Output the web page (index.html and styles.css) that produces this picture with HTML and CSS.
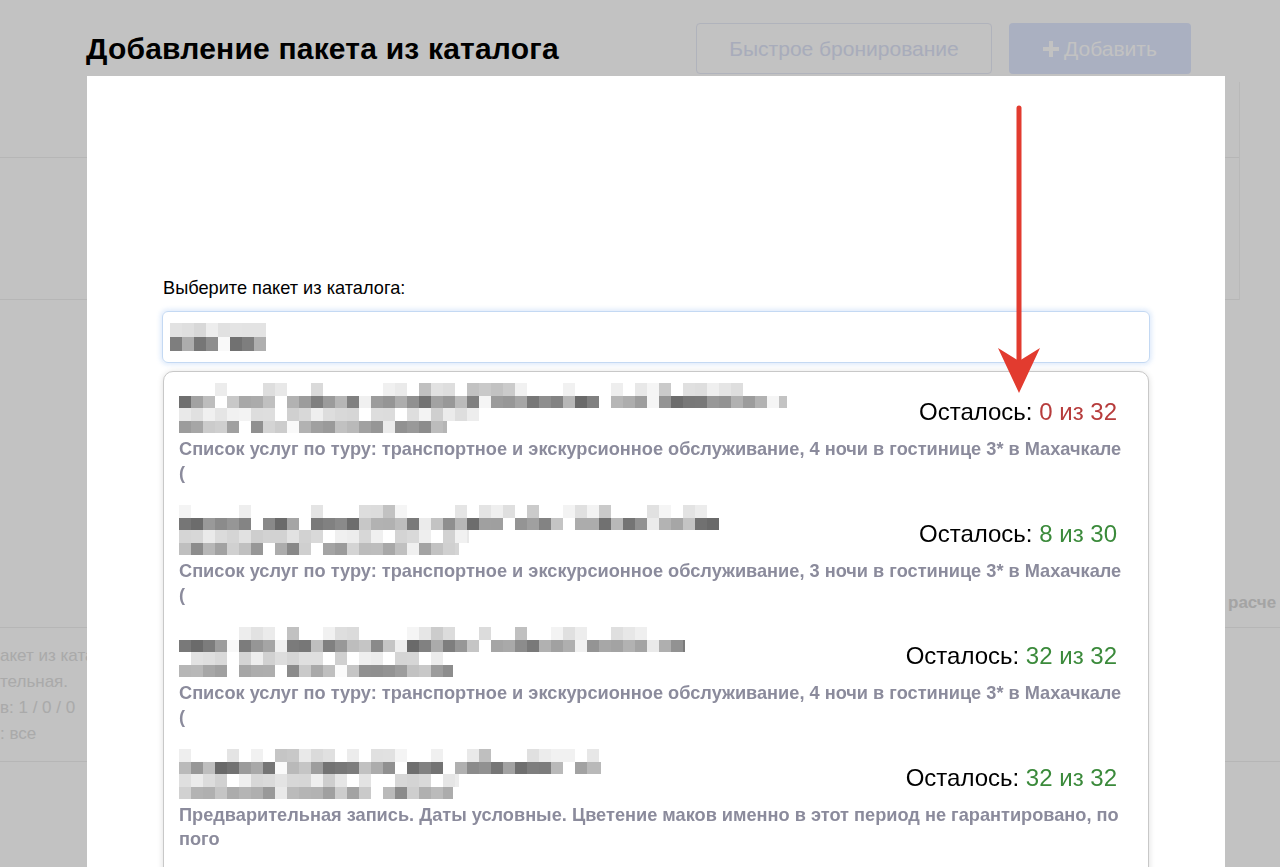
FILE: index.html
```html
<!DOCTYPE html>
<html lang="ru">
<head>
    <meta charset="UTF-8">
    <meta name="viewport" content="width=device-width, initial-scale=1.0">
    <title>Добавление пакета из каталога</title>
    <link rel="stylesheet" href="styles.css">
</head>
<body>
    <div class="page">
        <header class="page-head">
            <h1>Добавление пакета из каталога</h1>
            <div class="head-actions">
                <button class="btn btn-outline">Быстрое бронирование</button>
                <button class="btn btn-primary">
                    <svg class="plus" viewBox="0 0 16 16" width="16" height="16"><path d="M6 0h4v6h6v4h-6v6H6v-6H0V6h6z" fill="currentColor"/></svg>
                    Добавить
                </button>
            </div>
        </header>

        <section class="card">
            <div class="card-row card-row-top"></div>
            <div class="card-row card-row-main"></div>
        </section>

        <div class="totals">
            <span class="totals-label">расче</span>
        </div>

        <div class="package-info">
            <div>акет из каталога</div>
            <div>тельная.</div>
            <div>в: 1 / 0 / 0</div>
            <div>: все</div>
        </div>
    </div>

    <div class="backdrop"></div>

    <div class="modal">
        <label class="field-label" for="package-search">Выберите пакет из каталога:</label>
        <div class="search-input" id="package-search">
            <canvas class="mosaic" width="96" height="28" data-rows="s96,d96" data-seed="11"></canvas>
        </div>

        <div class="dropdown">
            <div class="option">
                <div class="option-head">
                    <canvas class="mosaic" width="608" height="50" data-rows="a608,d608,l300,m268" data-seed="3"></canvas>
                    <div class="stock">Осталось: <span class="stock-empty">0 из 32</span></div>
                </div>
                <div class="option-desc">Список услуг по туру: транспортное и экскурсионное обслуживание, 4 ночи в гостинице 3* в Махачкале (</div>
            </div>
            <div class="option">
                <div class="option-head">
                    <canvas class="mosaic" width="550" height="50" data-rows="a550,d540,l290,m280" data-seed="29"></canvas>
                    <div class="stock">Осталось: <span class="stock-ok">8 из 30</span></div>
                </div>
                <div class="option-desc">Список услуг по туру: транспортное и экскурсионное обслуживание, 3 ночи в гостинице 3* в Махачкале (</div>
            </div>
            <div class="option">
                <div class="option-head">
                    <canvas class="mosaic" width="506" height="50" data-rows="a506,d506,l280,m274" data-seed="57"></canvas>
                    <div class="stock">Осталось: <span class="stock-ok">32 из 32</span></div>
                </div>
                <div class="option-desc">Список услуг по туру: транспортное и экскурсионное обслуживание, 4 ночи в гостинице 3* в Махачкале (</div>
            </div>
            <div class="option">
                <div class="option-head">
                    <canvas class="mosaic" width="434" height="50" data-rows="a434,d422,l280,m274" data-seed="83"></canvas>
                    <div class="stock">Осталось: <span class="stock-ok">32 из 32</span></div>
                </div>
                <div class="option-desc">Предварительная запись. Даты условные. Цветение маков именно в этот период не гарантировано, по пого</div>
            </div>
            <div class="option">
                <div class="option-head">
                    <canvas class="mosaic" width="520" height="50" data-rows="a520,d510,l280,m270" data-seed="101"></canvas>
                </div>
            </div>
        </div>
    </div>

    <svg class="arrow" width="46" height="296" viewBox="0 0 46 296">
        <line x1="23" y1="4" x2="23" y2="262" stroke="#e23b2f" stroke-width="5" stroke-linecap="round"/>
        <path d="M2 244 L23 289 L44 244 L23 257 Z" fill="#e23b2f"/>
    </svg>

    <script src="script.js"></script>
</body>
</html>
```

FILE: styles.css
```css
* {
    box-sizing: border-box;
}
html, body {
    height: 100%;
}
body {
    margin: 0;
    font-family: "Liberation Sans", Arial, sans-serif;
    background: #fff;
    color: #000;
    overflow: hidden;
}

/* page behind the dialog */
.page-head {
    display: flex;
    align-items: center;
    justify-content: space-between;
    padding: 23px 89px 0 86px;
}
.page-head h1 {
    margin: 0;
    font-size: 30px;
    line-height: 34px;
    font-weight: bold;
    letter-spacing: 0.2px;
}
.head-actions {
    display: flex;
    gap: 17px;
}
.btn {
    height: 51px;
    border-radius: 4px;
    font-family: "Liberation Sans", Arial, sans-serif;
    font-size: 21px;
}
.btn-outline {
    width: 296px;
    background: #fff;
    border: 1px solid #e8ebf7;
    color: #dde3f6;
}
.btn-primary {
    width: 182px;
    border: none;
    background: #e0e8fe;
    color: #fff;
    display: flex;
    align-items: center;
    justify-content: center;
    gap: 5px;
}
.card {
    margin: 8px 40px 0 0;
    border-right: 1px solid #f3f3f3;
}
.card-row {
    border-bottom: 1px solid #f0f0f0;
}
.card-row-top {
    height: 76px;
}
.card-row-main {
    height: 142px;
}
.totals {
    height: 328px;
    display: flex;
    align-items: flex-end;
    padding: 0 0 14px 1228px;
    border-bottom: 1px solid #f0f0f0;
    white-space: nowrap;
}
.totals-label {
    font-size: 17px;
    font-weight: bold;
    color: #d8d8d8;
}
.package-info {
    padding: 15px 0 14px;
    font-size: 17px;
    line-height: 26px;
    color: #e0e0e0;
    border-bottom: 1px solid #f0f0f0;
}

.backdrop {
    position: fixed;
    inset: 0;
    background: rgba(0, 0, 0, 0.24);
}

/* dialog */
.modal {
    position: fixed;
    left: 87px;
    top: 76px;
    bottom: 0;
    width: 1138px;
    background: #fff;
    padding: 201px 75px 0;
}
.field-label {
    display: block;
    font-size: 18.2px;
    line-height: 22px;
    margin-left: 1px;
    margin-bottom: 12px;
}
.search-input {
    height: 52px;
    border: 1px solid #c4d9f3;
    border-radius: 6px;
    box-shadow: 0 0 4px 2px rgba(120, 170, 235, 0.22);
    display: flex;
    align-items: center;
    padding-left: 7px;
}
.mosaic {
    display: block;
}
.dropdown {
    margin: 8px 1px 0;
    border: 1px solid #c8c8c8;
    border-radius: 10px;
    box-shadow: 0 1px 6px rgba(0, 0, 0, 0.14);
    background: #fff;
}
.option {
    padding: 11px 22px 9px 15px;
}
.option-head {
    display: flex;
    justify-content: space-between;
    align-items: center;
    height: 50px;
}
.stock {
    font-size: 24px;
    line-height: 30px;
    padding-top: 8px;
    margin-right: 9px;
    white-space: nowrap;
}
.stock-empty {
    color: #b73c3c;
}
.stock-ok {
    color: #3b8a3b;
}
.option-desc {
    margin-top: 4px;
    font-size: 18.2px;
    line-height: 24px;
    font-weight: bold;
    color: #8b8b9c;
}

.arrow {
    position: fixed;
    left: 996px;
    top: 104px;
}
```

FILE: script.js
```js
// pixelated placeholders for the hidden package titles
function makeRandom(seed) {
    return function () {
        seed = (seed * 16807) % 2147483647;
        return (seed - 1) / 2147483646;
    };
}

function grey(v) {
    v = Math.round(v);
    return 'rgb(' + v + ',' + v + ',' + v + ')';
}

document.querySelectorAll('canvas.mosaic').forEach(function (canvas) {
    const ctx = canvas.getContext('2d');
    const rand = makeRandom(Number(canvas.dataset.seed));
    const rows = canvas.dataset.rows.split(',');
    const cell = 12;
    const rowH = canvas.height / rows.length;

    rows.forEach(function (row, r) {
        const kind = row[0];
        const width = Number(row.slice(1));
        const cells = Math.ceil(width / cell);
        let wordLeft = 3 + Math.floor(rand() * 6);

        for (let i = 0; i < cells; i++) {
            const x = i * cell;
            const y = Math.round(r * rowH);
            const h = Math.round((r + 1) * rowH) - y;
            const n = rand();
            let v = null;

            if (kind === 'a') {
                if (n > 0.5) v = 218 + rand() * 28;
                if (n > 0.94) v = 190 + rand() * 15;
            } else if (kind === 'l') {
                if (n > 0.2) v = 205 + rand() * 40;
            } else if (kind === 's') {
                v = 215 + n * 25;
            } else {
                if (wordLeft === 0) {
                    v = n > 0.5 ? 232 + rand() * 20 : null;
                    wordLeft = 3 + Math.floor(rand() * 7);
                } else {
                    v = kind === 'd' ? 105 + n * 95 : 135 + n * 80;
                    wordLeft--;
                }
            }

            if (v !== null) {
                ctx.fillStyle = grey(v);
                ctx.fillRect(x, y, Math.min(cell, width - x), h);
            }
        }
    });
});
```
